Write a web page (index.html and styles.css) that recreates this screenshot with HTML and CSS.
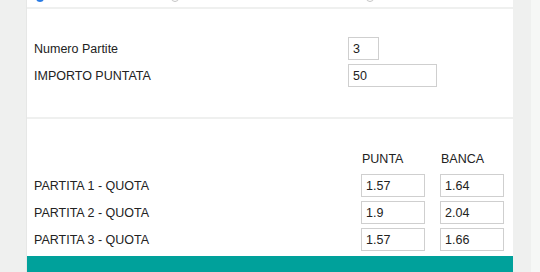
FILE: index.html
```html
<!DOCTYPE html>
<html>
<head>
<meta charset="utf-8">
<link rel="stylesheet" href="styles.css">
</head>
<body>
<div class="page">
  <div class="panel">
    <div class="card card-top">
      <div class="tabs">
        <span class="dot dot-active"></span>
        <span class="dot dot-mid"></span>
        <span class="dot dot-right"></span>
      </div>
    </div>
    <div class="card card-settings">
      <div class="form-grid">
        <label class="lbl">Numero Partite</label>
        <input class="inp inp-small" type="text" value="3">
        <label class="lbl">IMPORTO PUNTATA</label>
        <input class="inp inp-wide" type="text" value="50">
      </div>
    </div>
    <div class="card card-odds">
      <div class="odds-grid">
        <span></span>
        <span class="head">PUNTA</span>
        <span class="head">BANCA</span>
        <span class="lbl">PARTITA 1 - QUOTA</span>
        <input class="inp" type="text" value="1.57">
        <input class="inp" type="text" value="1.64">
        <span class="lbl">PARTITA 2 - QUOTA</span>
        <input class="inp" type="text" value="1.9">
        <input class="inp" type="text" value="2.04">
        <span class="lbl">PARTITA 3 - QUOTA</span>
        <input class="inp" type="text" value="1.57">
        <input class="inp" type="text" value="1.66">
      </div>
    </div>
    <div class="action-bar"></div>
  </div>
  <div class="edge"></div>
</div>
</body>
</html>
```

FILE: styles.css
```css
html, body {
  margin: 0;
  padding: 0;
  height: 100%;
  overflow: hidden;
}
body {
  background: #eff0ef;
  font-family: "Liberation Sans", Arial, Helvetica, sans-serif;
  color: #222;
}
.page {
  display: flex;
  height: 272px;
}
.panel {
  margin-left: 26px;
  width: 487px;
  display: flex;
  flex-direction: column;
  gap: 2px;
  border-left: 1px solid #e6e7e6;
  box-sizing: border-box;
}
.edge {
  margin-left: auto;
  width: 9px;
  background: #f6f7f6;
}
.card {
  background: #fff;
}
.card-top {
  height: 7px;
  overflow: hidden;
}
.tabs {
  display: flex;
  margin-top: -6px;
  padding-left: 9px;
}
.dot {
  display: block;
  width: 8px;
  height: 8px;
  border-radius: 50%;
  border: 1px solid #c4c4c4;
  box-sizing: border-box;
}
.dot-active {
  border: 2px solid #2a7be4;
}
.dot-mid {
  margin-left: 127px;
}
.dot-right {
  margin-left: 187px;
}
.card-settings {
  height: 108px;
  padding: 28px 0 0 7px;
  box-sizing: border-box;
}
.form-grid {
  display: grid;
  grid-template-columns: 314px auto;
  row-gap: 4px;
  align-items: center;
}
.lbl {
  font-size: 12.5px;
  line-height: 15px;
  color: #222;
  padding-top: 1px;
}
.inp {
  box-sizing: border-box;
  height: 23px;
  width: 64px;
  border: 1px solid #cfcfcf;
  padding: 0 0 0 4px;
  font-family: "Liberation Sans", Arial, sans-serif;
  font-size: 12.5px;
  color: #222;
  background: #fff;
  outline: none;
  margin: 0;
}
.inp-small {
  width: 31px;
}
.inp-wide {
  width: 89px;
}
.card-odds {
  flex: 1;
  padding: 33px 0 0 7px;
  box-sizing: border-box;
}
.odds-grid {
  display: grid;
  grid-template-columns: 312px 64px 64px;
  column-gap: 15px;
  row-gap: 4px;
  align-items: center;
}
.head {
  font-size: 12.5px;
  line-height: 15px;
  padding-left: 1px;
  margin-bottom: 3px;
  color: #222;
}
.action-bar {
  height: 16px;
  margin-top: -2px;
  background: #00a19b;
}
```
